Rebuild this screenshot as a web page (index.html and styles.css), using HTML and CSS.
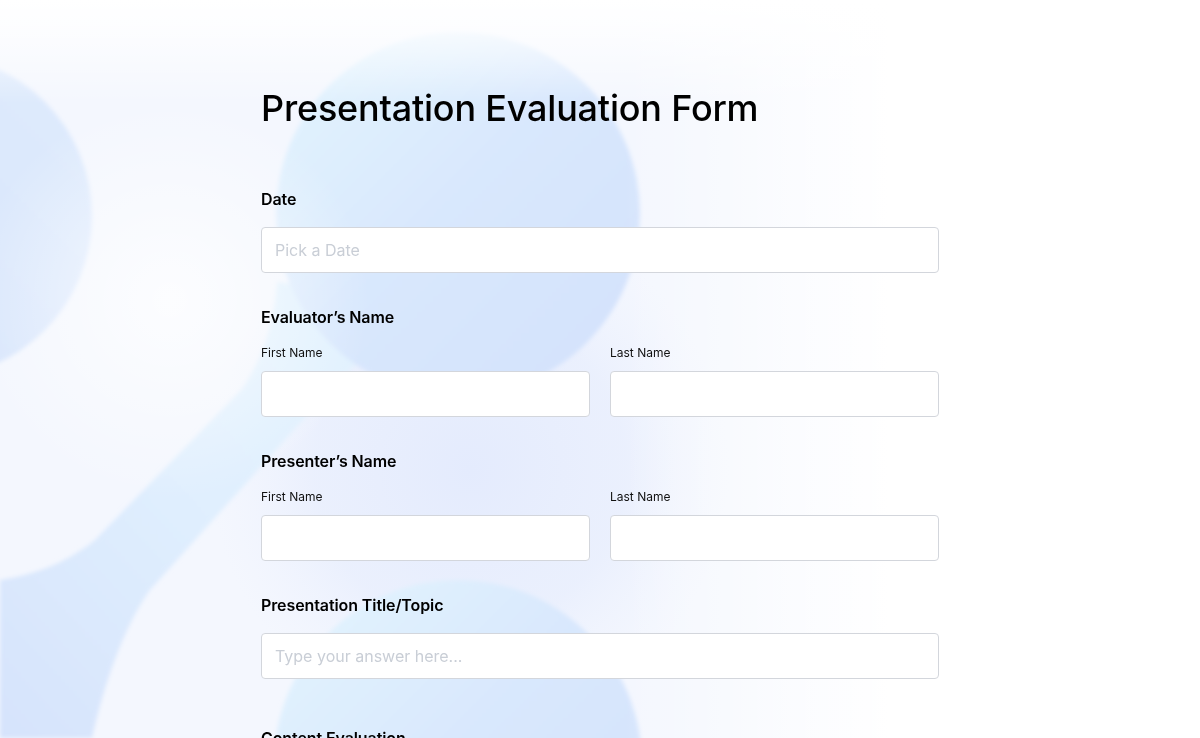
FILE: index.html
```html
<!DOCTYPE html>
<html lang="en">
<head>
<meta charset="utf-8">
<title>Presentation Evaluation Form</title>
<link rel="stylesheet" href="styles.css">
</head>
<body>
<svg class="backdrop" viewBox="0 0 1200 738" width="1200" height="738" aria-hidden="true">
  <defs>
    <linearGradient id="blob" x1="0" y1="0" x2="1" y2="1">
      <stop offset="0" stop-color="#e4f6fe"/>
      <stop offset="0.45" stop-color="#d9e8fd"/>
      <stop offset="1" stop-color="#d3e1fc"/>
    </linearGradient>
    <linearGradient id="blobL" x1="1" y1="0" x2="0" y2="1">
      <stop offset="0" stop-color="#dfebfd"/>
      <stop offset="1" stop-color="#d5e3fc"/>
    </linearGradient>
    <linearGradient id="band" x1="1" y1="0" x2="0" y2="1">
      <stop offset="0" stop-color="#e2f3fe"/>
      <stop offset="0.5" stop-color="#e0effe"/>
      <stop offset="1" stop-color="#d6e3fc"/>
    </linearGradient>
    <radialGradient id="mid" cx="470" cy="470" r="260" gradientUnits="userSpaceOnUse">
      <stop offset="0" stop-color="#e4ebfd" stop-opacity="1"/>
      <stop offset="0.6" stop-color="#e8eefd" stop-opacity="0.8"/>
      <stop offset="1" stop-color="#eef2fe" stop-opacity="0"/>
    </radialGradient>
    <linearGradient id="fogR" x1="0" y1="0" x2="1" y2="0">
      <stop offset="0.52" stop-color="#ffffff" stop-opacity="0"/>
      <stop offset="0.62" stop-color="#ffffff" stop-opacity="0.45"/>
      <stop offset="0.74" stop-color="#ffffff" stop-opacity="1"/>
    </linearGradient>
    <linearGradient id="fogT" x1="0" y1="0" x2="0" y2="1">
      <stop offset="0" stop-color="#ffffff" stop-opacity="1"/>
      <stop offset="0.03" stop-color="#ffffff" stop-opacity="0.85"/>
      <stop offset="0.14" stop-color="#ffffff" stop-opacity="0"/>
    </linearGradient>
    <radialGradient id="fogC" cx="170" cy="300" r="200" gradientUnits="userSpaceOnUse">
      <stop offset="0" stop-color="#ffffff" stop-opacity="0.75"/>
      <stop offset="1" stop-color="#ffffff" stop-opacity="0"/>
    </radialGradient>
    <filter id="soft" x="-20%" y="-20%" width="140%" height="140%">
      <feGaussianBlur stdDeviation="2"/>
    </filter>
  </defs>
  <rect width="1200" height="738" fill="#f4f7fe"/>
  <rect width="1200" height="738" fill="url(#mid)"/>
  <g filter="url(#soft)">
    <circle cx="-70" cy="216" r="162" fill="url(#blobL)"/>
    <path d="M 0 580 C 40 574 70 560 95 540 L 241 390 C 262 362 275 320 277 282 L 420 300 L 330 390 L 150 590 C 125 625 105 680 92 738 L 0 738 Z" fill="url(#band)"/>
    <circle cx="458" cy="214" r="182" fill="url(#blob)"/>
    <circle cx="458" cy="764" r="184" fill="url(#blob)"/>
  </g>
  <rect width="1200" height="738" fill="url(#fogC)"/>
  <rect width="1200" height="738" fill="url(#fogR)"/>
  <rect width="1200" height="738" fill="url(#fogT)"/>
</svg>

<main class="form">
  <h1 class="title">Presentation Evaluation Form</h1>

  <section class="field">
    <div class="label">Date</div>
    <div class="input"><span class="placeholder">Pick a Date</span></div>
  </section>

  <section class="field">
    <div class="label">Evaluator’s Name</div>
    <div class="pair">
      <div class="sub">
        <div class="sublabel">First Name</div>
        <div class="input"></div>
      </div>
      <div class="sub">
        <div class="sublabel">Last Name</div>
        <div class="input"></div>
      </div>
    </div>
  </section>

  <section class="field">
    <div class="label">Presenter’s Name</div>
    <div class="pair">
      <div class="sub">
        <div class="sublabel">First Name</div>
        <div class="input"></div>
      </div>
      <div class="sub">
        <div class="sublabel">Last Name</div>
        <div class="input"></div>
      </div>
    </div>
  </section>

  <section class="field">
    <div class="label">Presentation Title/Topic</div>
    <div class="input"><span class="placeholder">Type your answer here...</span></div>
  </section>

  <section class="field section-gap">
    <div class="label">Content Evaluation</div>
  </section>
</main>
</body>
</html>
```

FILE: styles.css
```css
* { box-sizing: border-box; }

html, body {
  margin: 0;
  padding: 0;
  height: 100%;
  overflow: hidden;
}

body {
  font-family: Inter, "Noto Sans", "Liberation Sans", sans-serif;
  color: #000;
  background: #fff;
  position: relative;
}

.backdrop {
  position: fixed;
  left: 0;
  top: 0;
  z-index: 0;
  display: block;
}

.form {
  position: relative;
  z-index: 1;
  width: 678px;
  margin: 0 auto;
  padding-top: 86px;
  display: flex;
  flex-direction: column;
  gap: 32px;
}

.title {
  margin: 0 0 25px 0;
  font-size: 36px;
  line-height: 44px;
  font-weight: 500;
  letter-spacing: -0.2px;
  color: #000;
}

.field {
  display: flex;
  flex-direction: column;
  gap: 16px;
}

.section-gap {
  margin-top: 15px;
}

.label {
  font-size: 16px;
  line-height: 24px;
  font-weight: 600;
  letter-spacing: -0.1px;
  color: #000;
}

.pair {
  display: grid;
  grid-template-columns: 1fr 1fr;
  column-gap: 20px;
}

.sub {
  display: flex;
  flex-direction: column;
  gap: 10px;
}

.sublabel {
  font-size: 12px;
  line-height: 16px;
  font-weight: 400;
  color: #111;
}

.input {
  height: 46px;
  background: #fff;
  border: 1px solid #d3d6dc;
  border-radius: 4px;
  display: flex;
  align-items: center;
  padding: 0 13px;
}

.placeholder {
  font-size: 16px;
  color: #c9ced6;
}
```
